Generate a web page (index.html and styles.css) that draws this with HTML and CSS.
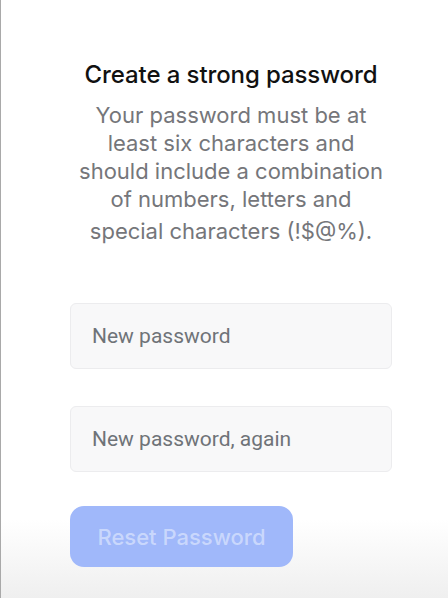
FILE: index.html
```html
<!DOCTYPE html>
<html>
<head>
<meta charset="utf-8">
<link rel="stylesheet" href="styles.css">
</head>
<body>
<div class="page">
  <main class="form">
    <h1 class="title">Create a strong password</h1>
    <p class="desc">Your password must be at least six characters and should include a combination of numbers, letters and <span class="last">special characters (!$@%).</span></p>
    <div class="field"><input class="input" type="password" placeholder="New password"></div>
    <div class="field"><input class="input" type="password" placeholder="New password, again"></div>
    <button class="btn" type="button">Reset Password</button>
  </main>
</div>
</body>
</html>
```
FILE: styles.css
```css
html, body {
  margin: 0;
  padding: 0;
  height: 100%;
}
body {
  font-family: Inter, "Noto Sans", sans-serif;
  background: linear-gradient(to bottom, #ffffff 0, #ffffff 520px, #efefef 598px);
}
.page {
  box-sizing: border-box;
  height: 598px;
  border-left: 1px solid #a9a9a9;
  padding: 60px 0 0 69px;
}
.form {
  width: 322px;
  display: flex;
  flex-direction: column;
}
.title {
  margin: 0;
  font-size: 24px;
  font-weight: 500;
  color: #111;
  text-align: center;
  line-height: 30px;
  letter-spacing: -0.1px;
}
.desc {
  margin: 11px 0 0;
  padding: 0 7px;
  font-size: 22px;
  line-height: 28px;
  color: #75767a;
  text-align: center;
}
.last {
  display: inline-block;
  margin: 4px 0;
}
.field:first-of-type {
  margin-top: 54px;
}
.field + .field {
  margin-top: 37px;
}
.input {
  box-sizing: border-box;
  width: 322px;
  height: 66px;
  border: 1px solid #ececee;
  border-radius: 6px;
  background: #f8f8f9;
  padding: 0 21px;
  font-family: Roboto, "Noto Sans", sans-serif;
  font-size: 21px;
  color: #333;
  outline: none;
}
.input::placeholder {
  color: #6f7378;
}
.btn {
  margin-top: 34px;
  width: 223px;
  height: 61px;
  border: none;
  border-radius: 14px;
  background: #a0b8fa;
  color: rgba(255, 255, 255, 0.45);
  font-family: Inter, "Noto Sans", sans-serif;
  font-size: 22px;
  font-weight: 500;
  cursor: pointer;
}
```
